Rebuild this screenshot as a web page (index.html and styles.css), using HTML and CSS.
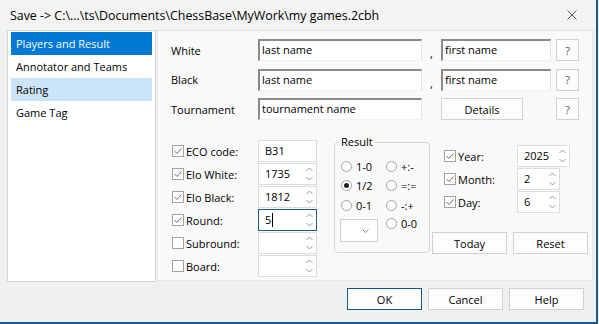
FILE: index.html
```html
<!DOCTYPE html>
<html lang="en">
<head>
    <meta charset="UTF-8">
    <title>Save game</title>
    <link rel="stylesheet" href="styles.css">
</head>
<body>
<div class="window">

    <!-- Title bar -->
    <div class="titlebar">
        <span class="title">Save -&gt; C:\...\ts\Documents\ChessBase\MyWork\my games.2cbh</span>
        <svg class="close" width="10" height="10" viewBox="0 0 10 10"><path d="M0.5 0.5 L9.5 9.5 M9.5 0.5 L0.5 9.5"/></svg>
    </div>

    <div class="main">
        <!-- Page list -->
        <ul class="pages">
            <li class="selected">Players and Result</li>
            <li>Annotator and Teams</li>
            <li class="hot">Rating</li>
            <li>Game Tag</li>
        </ul>

        <div class="panel">
            <!-- Players -->
            <div class="players">
                <span class="lbl">White</span>
                <div class="edit">last name</div>
                <span class="comma">,</span>
                <div class="edit">first name</div>
                <button class="btn q">?</button>

                <span class="lbl">Black</span>
                <div class="edit">last name</div>
                <span class="comma">,</span>
                <div class="edit">first name</div>
                <button class="btn q">?</button>

                <span class="lbl">Tournament</span>
                <div class="edit">tournament name</div>
                <span></span>
                <button class="btn details">Details</button>
                <button class="btn q">?</button>
            </div>

            <div class="lower">
                <!-- Game data -->
                <div class="fields">
                    <label class="check on"><span class="box"><svg width="10" height="10" viewBox="0 0 10 10"><path d="M1.5 5 L4 7.5 L8.5 2.5"/></svg></span>ECO code:</label>
                    <div class="spin">B31</div>

                    <label class="check on"><span class="box"><svg width="10" height="10" viewBox="0 0 10 10"><path d="M1.5 5 L4 7.5 L8.5 2.5"/></svg></span>Elo White:</label>
                    <div class="spin">1735<svg class="arrows" width="7" height="14" viewBox="0 0 7 14"><path d="M0.5 4 L3.5 1 L6.5 4 M0.5 10 L3.5 13 L6.5 10"/></svg></div>

                    <label class="check on"><span class="box"><svg width="10" height="10" viewBox="0 0 10 10"><path d="M1.5 5 L4 7.5 L8.5 2.5"/></svg></span>Elo Black:</label>
                    <div class="spin">1812<svg class="arrows" width="7" height="14" viewBox="0 0 7 14"><path d="M0.5 4 L3.5 1 L6.5 4 M0.5 10 L3.5 13 L6.5 10"/></svg></div>

                    <label class="check on"><span class="box"><svg width="10" height="10" viewBox="0 0 10 10"><path d="M1.5 5 L4 7.5 L8.5 2.5"/></svg></span>Round:</label>
                    <div class="spin focus">5<span class="caret"></span><svg class="arrows" width="7" height="14" viewBox="0 0 7 14"><path d="M0.5 4 L3.5 1 L6.5 4 M0.5 10 L3.5 13 L6.5 10"/></svg></div>

                    <label class="check"><span class="box"></span>Subround:</label>
                    <div class="spin"><svg class="arrows" width="7" height="14" viewBox="0 0 7 14"><path d="M0.5 4 L3.5 1 L6.5 4 M0.5 10 L3.5 13 L6.5 10"/></svg></div>

                    <label class="check"><span class="box"></span>Board:</label>
                    <div class="spin"><svg class="arrows" width="7" height="14" viewBox="0 0 7 14"><path d="M0.5 4 L3.5 1 L6.5 4 M0.5 10 L3.5 13 L6.5 10"/></svg></div>
                </div>

                <!-- Result -->
                <fieldset class="result">
                    <legend>Result</legend>
                    <div class="radios">
                        <label class="radio"><span class="dot"></span>1-0</label>
                        <label class="radio"><span class="dot"></span>+:-</label>
                        <label class="radio on"><span class="dot"></span>1/2</label>
                        <label class="radio"><span class="dot"></span>=:=</label>
                        <label class="radio"><span class="dot"></span>0-1</label>
                        <label class="radio"><span class="dot"></span>-:+</label>
                        <div class="combo"><svg width="7" height="4" viewBox="0 0 7 4"><path d="M0.5 0.5 L3.5 3.5 L6.5 0.5"/></svg></div>
                        <label class="radio last"><span class="dot"></span>0-0</label>
                    </div>
                </fieldset>

                <!-- Date -->
                <div class="dates">
                    <div class="date-rows">
                        <label class="check on"><span class="box"><svg width="10" height="10" viewBox="0 0 10 10"><path d="M1.5 5 L4 7.5 L8.5 2.5"/></svg></span>Year:</label>
                        <div class="spin year">2025<svg class="arrows" width="7" height="14" viewBox="0 0 7 14"><path d="M0.5 4 L3.5 1 L6.5 4 M0.5 10 L3.5 13 L6.5 10"/></svg></div>

                        <label class="check on"><span class="box"><svg width="10" height="10" viewBox="0 0 10 10"><path d="M1.5 5 L4 7.5 L8.5 2.5"/></svg></span>Month:</label>
                        <div class="spin short">2<svg class="arrows" width="7" height="14" viewBox="0 0 7 14"><path d="M0.5 4 L3.5 1 L6.5 4 M0.5 10 L3.5 13 L6.5 10"/></svg></div>

                        <label class="check on"><span class="box"><svg width="10" height="10" viewBox="0 0 10 10"><path d="M1.5 5 L4 7.5 L8.5 2.5"/></svg></span>Day:</label>
                        <div class="spin short">6<svg class="arrows" width="7" height="14" viewBox="0 0 7 14"><path d="M0.5 4 L3.5 1 L6.5 4 M0.5 10 L3.5 13 L6.5 10"/></svg></div>
                    </div>
                    <div class="date-buttons">
                        <button class="btn wide">Today</button>
                        <button class="btn wide">Reset</button>
                    </div>
                </div>
            </div>
        </div>
    </div>

    <!-- Dialog buttons -->
    <div class="buttons">
        <button class="btn wide default">OK</button>
        <button class="btn wide">Cancel</button>
        <button class="btn wide">Help</button>
    </div>
</div>
</body>
</html>
```

FILE: styles.css
```css
* {
    box-sizing: border-box;
}
body {
    margin: 0;
    width: 599px;
    height: 324px;
    overflow: hidden;
    background: #f0f0f0;
    font: 11px "Open Sans", "Noto Sans", sans-serif;
    color: #000;
}
.window {
    width: 598px;
    height: 324px;
    border-right: 2px solid #1d5a8c;
    border-bottom: 2px solid #1d5a8c;
    background: #f0f0f0;
}

/* title bar */
.titlebar {
    height: 30px;
    display: flex;
    align-items: center;
    justify-content: space-between;
    padding: 0 19px 0 10px;
    background: #f3f3f3;
}
.title {
    font-size: 12.4px;
}
.close path {
    stroke: #555;
    stroke-width: 1;
    fill: none;
}

/* main area */
.main {
    display: flex;
    gap: 1px;
    height: 252px;
    padding-left: 7px;
}
.pages {
    list-style: none;
    margin: 0;
    padding: 1px 3px;
    width: 149px;
    height: 252px;
    background: #fff;
    border: 1px solid #d4d4d4;
}
.pages li {
    height: 23px;
    line-height: 23px;
    padding-left: 5px;
}
.pages .selected {
    background: #0078d4;
    color: #fff;
}
.pages .hot {
    background: #cce4f7;
}
.panel {
    width: 436px;
    height: 251px;
    background: #f9f9f9;
    border: 1px solid #e6e6e6;
    padding: 8px 0 0 14px;
}

/* players grid */
.players {
    display: grid;
    grid-template-columns: 86px 164px 19px 110px 28px;
    grid-auto-rows: 22px;
    row-gap: 7.5px;
    align-items: center;
}
.lbl {
    margin-left: -1px;
}
.edit {
    height: 22px;
    background: #fff;
    border-style: solid;
    border-width: 2px 1px 1px 2px;
    border-color: #8a8a8a #e4e4e4 #f0f0f0 #8a8a8a;
    padding-left: 2px;
    line-height: 18px;
}
.comma {
    align-self: end;
    text-align: center;
    line-height: 14px;
}
.btn {
    font: inherit;
    color: #000;
    background: #fdfdfd;
    border: 1px solid #d0d0d0;
    height: 22px;
    padding: 0;
}
.q {
    width: 23px;
    justify-self: end;
    color: #555;
}
.details {
    width: 82px;
}
.wide {
    width: 75px;
}
.default {
    border-color: #0f5a96;
}

/* lower area */
.lower {
    display: flex;
    align-items: flex-start;
    margin-top: 20px;
}
.fields {
    display: grid;
    grid-template-columns: 86px 59px;
    grid-auto-rows: 22px;
    row-gap: 1px;
}
.check {
    display: flex;
    align-items: center;
    gap: 2px;
}
.box {
    width: 12px;
    height: 12px;
    border: 1px solid #a2a2a2;
    background: #fff;
    display: flex;
    align-items: center;
    justify-content: center;
}
.box path {
    stroke: #6a6a6a;
    stroke-width: 1;
    fill: none;
}
.spin {
    background: #fff;
    border: 1px solid #dcdcdc;
    line-height: 20px;
    padding-left: 6px;
    display: flex;
    align-items: center;
}
.spin .arrows {
    margin-left: auto;
    margin-right: 3px;
}
.arrows path {
    stroke: #999;
    stroke-width: 1;
    fill: none;
}
.spin.focus {
    border-color: #1a5a8c;
}
.caret {
    width: 1px;
    height: 14px;
    background: #000;
    margin-left: 1px;
}

/* result group */
.result {
    margin: -5px 0 0 17px;
    width: 96px;
    height: 118px;
    border: 1px solid #d5d5d5;
    border-radius: 4px;
    padding: 0 6px;
}
.result legend {
    padding: 0 2px;
    margin-left: -2px;
    line-height: 14px;
}
.radios {
    display: grid;
    grid-template-columns: 45px auto;
    grid-template-rows: 20px 19px 20px auto;
    padding-top: 7px;
    align-items: center;
}
.radio {
    display: flex;
    align-items: center;
    gap: 4px;
}
.dot {
    width: 11px;
    height: 11px;
    border-radius: 50%;
    border: 1px solid #a2a2a2;
    background: #fff;
    display: flex;
    align-items: center;
    justify-content: center;
}
.radio.on .dot::after {
    content: "";
    width: 5px;
    height: 5px;
    border-radius: 50%;
    background: #222;
}
.combo {
    width: 38px;
    height: 23px;
    margin: 4px 0 0 -1px;
    background: #fff;
    border: 1px solid #d0d0d0;
    display: flex;
    align-items: center;
    justify-content: flex-end;
    padding-right: 8px;
}
.combo path {
    stroke: #888;
    stroke-width: 1;
    fill: none;
}
.radio.last {
    align-self: start;
    margin-top: 1px;
}

/* date */
.dates {
    margin-left: 2px;
    width: 156px;
}
.date-rows {
    display: grid;
    grid-template-columns: 73px auto;
    grid-auto-rows: 22px;
    row-gap: 1px;
    padding-left: 12px;
    margin-top: 5px;
}
.spin.year {
    width: 53px;
}
.spin.short {
    width: 43px;
}
.date-buttons {
    display: flex;
    gap: 6px;
    margin-top: 19px;
}

/* dialog buttons */
.buttons {
    display: flex;
    justify-content: flex-end;
    gap: 6px;
    padding: 6px 12px 0 0;
}
```
